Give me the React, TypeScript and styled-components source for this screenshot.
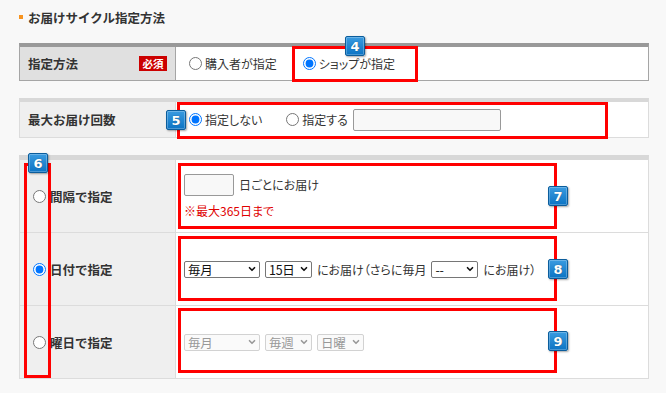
import React from 'react'
import styled, { createGlobalStyle } from 'styled-components'
import { ChevronDown } from 'lucide-react'

const GlobalStyle = createGlobalStyle`
  html, body {
    margin: 0;
    padding: 0;
    background: #f8f8f8;
  }
  body {
    font-family: 'Noto Sans CJK JP', 'Noto Sans', sans-serif;
    color: #333;
    font-size: 12px;
  }
`

const Page = styled.div`
  position: relative;
  width: 666px;
  height: 393px;
  padding: 8px 0 0 19px;
  box-sizing: border-box;
  overflow: hidden;
`

const Title = styled.h2`
  display: flex;
  align-items: center;
  gap: 5px;
  margin: 0 0 17px;
  height: 18px;
  font-size: 12.5px;
  font-weight: bold;
  color: #333;
  &::before {
    content: '';
    width: 4px;
    height: 4px;
    background: #f7931e;
  }
`

const Section = styled.div<{ $bar: string; $barSize: number; $line: string }>`
  width: 630px;
  margin-bottom: 17px;
  background: #fff;
  border-top: ${p => p.$barSize}px solid ${p => p.$bar};
  border-left: 1px solid ${p => p.$line};
  border-right: 1px solid ${p => p.$line};
  box-sizing: border-box;
`

const Row = styled.div<{ $h: number; $line: string }>`
  display: grid;
  grid-template-columns: 156px 1fr;
  height: ${p => p.$h}px;
  border-bottom: 1px solid ${p => p.$line};
  box-sizing: border-box;
`

const Label = styled.div<{ $bg: string; $line: string; $pad?: number }>`
  display: flex;
  align-items: center;
  justify-content: space-between;
  gap: 4px;
  padding: 0 8px 0 ${p => p.$pad ?? 8}px;
  background: ${p => p.$bg};
  border-right: 1px solid ${p => p.$line};
  font-size: 12.5px;
  font-weight: bold;
  color: #333;
`

const LabelText = styled.span`
  display: flex;
  align-items: center;
  gap: 4px;
  margin-right: auto;
`

const Required = styled.span`
  display: inline-flex;
  align-items: center;
  justify-content: center;
  width: 28px;
  height: 15px;
  background: #cc0000;
  color: #fff;
  font-size: 10.5px;
  font-weight: bold;
`

const Cell = styled.div<{ $pad: number; $gap?: number }>`
  display: flex;
  align-items: center;
  gap: ${p => p.$gap ?? 5}px;
  padding-left: ${p => p.$pad}px;
  font-feature-settings: 'palt';
`

const Stack = styled.div`
  display: flex;
  flex-direction: column;
  justify-content: center;
  padding-left: 8px;
  font-feature-settings: 'palt';
`

const Line = styled.div`
  display: flex;
  align-items: center;
  gap: 5px;
`

const Choice = styled.label<{ $gap: number }>`
  display: inline-flex;
  align-items: center;
  gap: 3px;
  margin-right: ${p => p.$gap}px;
  font-size: 12px;
  color: #333;
`

const Radio = styled.input.attrs({ type: 'radio' })`
  width: 13px;
  height: 13px;
  margin: 0;
  accent-color: #0075ff;
`

const TextBox = styled.input.attrs({ type: 'text' })<{ $w: number; $h: number }>`
  width: ${p => p.$w}px;
  height: ${p => p.$h}px;
  margin: 0;
  padding: 0 4px;
  border: 1px solid #999;
  border-radius: 2px;
  background: #f8f8f8;
  box-sizing: border-box;
`

const Note = styled.div`
  margin-top: 7px;
  color: #e00000;
  font-size: 12px;
  line-height: 16px;
`

const SelectBox = styled.span<{ $w: number; $off?: boolean }>`
  position: relative;
  display: inline-flex;
  width: ${p => p.$w}px;
  height: 17px;
  color: ${p => (p.$off ? '#999' : '#111')};
  svg {
    position: absolute;
    right: 3px;
    top: 3px;
    pointer-events: none;
  }
`

const Select = styled.select`
  appearance: none;
  width: 100%;
  height: 100%;
  margin: 0;
  padding: 0 0 0 3px;
  font-family: 'Noto Sans CJK JP', sans-serif;
  font-size: 12.5px;
  letter-spacing: -0.3px;
  line-height: 15px;
  color: inherit;
  border: 1px solid #767676;
  border-radius: 2px;
  background: #fff;
  box-sizing: border-box;
  &:disabled {
    opacity: 1;
    border-color: #d2d2d2;
    background: #fafafa;
  }
`

const Frame = styled.div<{ $x: number; $y: number; $w: number; $h: number }>`
  position: absolute;
  left: ${p => p.$x}px;
  top: ${p => p.$y}px;
  width: ${p => p.$w}px;
  height: ${p => p.$h}px;
  border: 3px solid #ff0000;
  box-sizing: border-box;
  pointer-events: none;
`

const Badge = styled.div<{ $x: number; $y: number }>`
  position: absolute;
  left: ${p => p.$x}px;
  top: ${p => p.$y}px;
  width: 20px;
  height: 20px;
  display: flex;
  align-items: center;
  justify-content: center;
  box-sizing: border-box;
  border: 1px solid #0b5d9c;
  border-radius: 2px;
  background: linear-gradient(#3a9be0, #0c74c4);
  box-shadow: 1px 1px 2px rgba(0, 0, 0, 0.35), inset 0 0 0 1px rgba(255, 255, 255, 0.25);
  color: #fff;
  font-family: 'DejaVu Sans', sans-serif;
  font-size: 13px;
  font-weight: bold;
  text-shadow: 0 0 1px rgba(0, 0, 0, 0.5);
`

const frames = [
  { x: 292, y: 46, w: 126, h: 36 },
  { x: 177, y: 102, w: 431, h: 37 },
  { x: 24, y: 163, w: 27, h: 215 },
  { x: 178, y: 163, w: 379, h: 66 },
  { x: 178, y: 236, w: 379, h: 65 },
  { x: 178, y: 308, w: 379, h: 65 },
]

const badges = [
  { n: 4, x: 345, y: 36 },
  { n: 5, x: 166, y: 110 },
  { n: 6, x: 28, y: 153 },
  { n: 7, x: 548, y: 186 },
  { n: 8, x: 548, y: 259 },
  { n: 9, x: 548, y: 331 },
]

const Dropdown = ({ w, value, off }: { w: number; value: string; off?: boolean }) => (
  <SelectBox $w={w} $off={off}>
    <Select disabled={off} defaultValue={value}>
      <option>{value}</option>
    </Select>
    <ChevronDown size={10} strokeWidth={4} />
  </SelectBox>
)

export default function App() {
  return (
    <Page>
      <GlobalStyle />
      <Title>お届けサイクル指定方法</Title>

      <Section $bar="#999" $barSize={4} $line="#a5a5a5">
        <Row $h={34} $line="#a5a5a5">
          <Label $bg="#e0e0e0" $line="#a5a5a5">
            <LabelText>指定方法</LabelText>
            <Required>必須</Required>
          </Label>
          <Cell $pad={13} $gap={0}>
            <Choice $gap={26}>
              <Radio name="method" />
              購入者が指定
            </Choice>
            <Choice $gap={0}>
              <Radio name="method" defaultChecked />
              ショップが指定
            </Choice>
          </Cell>
        </Row>
      </Section>

      <Section $bar="#d8d8d8" $barSize={4} $line="#dcdcdc">
        <Row $h={36} $line="#dcdcdc">
          <Label $bg="#efefef" $line="#dcdcdc">
            <LabelText>最大お届け回数</LabelText>
          </Label>
          <Cell $pad={13} $gap={0}>
            <Choice $gap={24}>
              <Radio name="max" defaultChecked />
              指定しない
            </Choice>
            <Choice $gap={5}>
              <Radio name="max" />
              指定する
            </Choice>
            <TextBox $w={148} $h={22} />
          </Cell>
        </Row>
      </Section>

      <Section $bar="#d8d8d8" $barSize={5} $line="#dcdcdc">
        <Row $h={73} $line="#dcdcdc">
          <Label $bg="#efefef" $line="#dcdcdc" $pad={13}>
            <LabelText>
              <Radio name="cycle" />
              間隔で指定
            </LabelText>
          </Label>
          <Stack>
            <Line>
              <TextBox $w={50} $h={22} />
              日ごとにお届け
            </Line>
            <Note>※最大365日まで</Note>
          </Stack>
        </Row>
        <Row $h={73} $line="#dcdcdc">
          <Label $bg="#efefef" $line="#dcdcdc" $pad={13}>
            <LabelText>
              <Radio name="cycle" defaultChecked />
              日付で指定
            </LabelText>
          </Label>
          <Cell $pad={8}>
            <Dropdown w={76} value="毎月" />
            <Dropdown w={47} value="15日" />
            <span>にお届け（さらに毎月</span>
            <Dropdown w={47} value="--" />
            <span>にお届け）</span>
          </Cell>
        </Row>
        <Row $h={73} $line="#dcdcdc">
          <Label $bg="#efefef" $line="#dcdcdc" $pad={13}>
            <LabelText>
              <Radio name="cycle" />
              曜日で指定
            </LabelText>
          </Label>
          <Cell $pad={8}>
            <Dropdown w={76} value="毎月" off />
            <Dropdown w={47} value="毎週" off />
            <Dropdown w={47} value="日曜" off />
          </Cell>
        </Row>
      </Section>

      {frames.map((f, i) => (
        <Frame key={i} $x={f.x} $y={f.y} $w={f.w} $h={f.h} />
      ))}
      {badges.map(b => (
        <Badge key={b.n} $x={b.x} $y={b.y}>
          {b.n}
        </Badge>
      ))}
    </Page>
  )
}
